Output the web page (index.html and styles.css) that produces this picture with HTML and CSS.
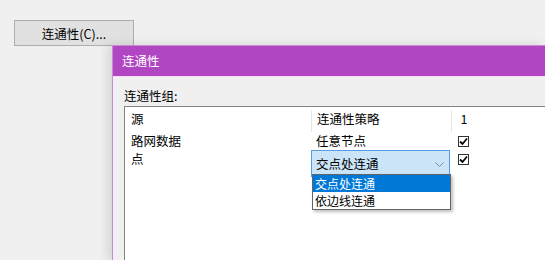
FILE: index.html
```html
<!DOCTYPE html>
<html>
<head>
<meta charset="utf-8">
<title>连通性</title>
<link rel="stylesheet" href="styles.css">
</head>
<body>
	<!-- toolbar -->
	<div class="toolbar">
		<button class="btn">连通性(C)...</button>
	</div>

	<!-- dialog window -->
	<div class="dialog">
		<div class="titlebar">连通性</div>
		<div class="content">
			<div class="label">连通性组:</div>
			<div class="grid">
				<div class="row head">
					<div class="cell c1">源</div>
					<div class="cell c2">连通性策略</div>
					<div class="cell c3">1</div>
				</div>
				<div class="row r2">
					<div class="cell c1">路网数据</div>
					<div class="cell c2">任意节点</div>
					<div class="cell c3"><span class="check"><svg width="9" height="9" viewBox="0 0 9 9"><path d="M1 4.5 L3.5 7 L8 1.5" fill="none" stroke="#000" stroke-width="1.8"/></svg></span></div>
				</div>
				<div class="row r3">
					<div class="cell c1">点</div>
					<div class="cell c2">
						<div class="combo">
							<span>交点处连通</span>
							<svg class="chev" width="9" height="6" viewBox="0 0 9 6"><path d="M0.5 0.5 L4.5 4.5 L8.5 0.5" fill="none" stroke="#8a8a8a" stroke-width="1"/></svg>
						</div>
					</div>
					<div class="cell c3"><span class="check"><svg width="9" height="9" viewBox="0 0 9 9"><path d="M1 4.5 L3.5 7 L8 1.5" fill="none" stroke="#000" stroke-width="1.8"/></svg></span></div>
				</div>

				<!-- open drop-down list -->
				<ul class="droplist">
					<li class="sel">交点处连通</li>
					<li>依边线连通</li>
				</ul>
			</div>
		</div>
	</div>
</body>
</html>
```

FILE: styles.css
```css
body {
	margin: 0;
	width: 545px;
	height: 260px;
	overflow: hidden;
	background: #f0f0f0;
	font: 12.5px "Noto Sans CJK SC", "Liberation Sans", sans-serif;
	color: #000;
}

.toolbar {
	padding: 20px 0 0 14px;
}

.btn {
	width: 120px;
	height: 26px;
	padding: 0;
	border: 1px solid #adadad;
	background: #e1e1e1;
	font: inherit;
	color: #000;
}

.dialog {
	position: absolute;
	left: 112px;
	top: 45px;
	width: 432px;
	height: 215px;
	overflow: hidden;
	border: 1px solid #c98ad4;
	border-right: none;
	border-bottom: none;
	background: #f0f0f0;
	box-shadow: -4px 0 10px rgba(0, 0, 0, 0.12);
}

.titlebar {
	height: 30px;
	line-height: 30px;
	padding-left: 9px;
	background: #b146c2;
	color: #fff;
	border-bottom: 1px solid #f6def8;
}

.content {
	padding: 9px 0 0 11px;
}

.label {
	height: 20px;
	line-height: 20px;
}

.grid {
	position: relative;
	height: 160px;
	background: #fff;
	border-top: 1px solid #828282;
	border-left: 1px solid #828282;
}

.row {
	display: flex;
}

.cell {
	line-height: 18px;
}

.c1 {
	width: 180px;
	padding-left: 6px;
}

.c2 {
	width: 134px;
	padding-left: 5px;
}

.c3 {
	width: 24px;
	text-align: center;
}

.head {
	height: 22px;
	padding-top: 3px;
}

.head .c2,
.head .c3 {
	border-left: 1px solid #e5e5e5;
}

.r2 {
	height: 18px;
}

.r3 {
	height: 28px;
}

.r2 .c3,
.r3 .c3 {
	margin-left: 1px;
}

.check {
	display: inline-block;
	width: 11px;
	height: 11px;
	box-sizing: border-box;
	border: 1px solid #333;
	background: #fff;
	margin-top: 2px;
	line-height: 0;
}

.r3 .c2 {
	padding-left: 0;
	width: 139px;
}

.combo {
	display: flex;
	align-items: center;
	justify-content: space-between;
	height: 27px;
	box-sizing: border-box;
	padding: 0 5px 0 4px;
	border: 1px solid #569de5;
	background: #cce4f7;
}

.chev {
	margin-top: 2px;
}

.droplist {
	position: absolute;
	left: 187px;
	top: 67px;
	width: 139px;
	margin: 0;
	padding: 0;
	list-style: none;
	box-sizing: border-box;
	border: 1px solid #646464;
	background: #fff;
	box-shadow: 2px 2px 3px rgba(0, 0, 0, 0.25);
}

.droplist li {
	height: 17px;
	line-height: 17px;
	padding-left: 2px;
	font-size: 12px;
	overflow: hidden;
}

.droplist li.sel {
	background: #0078d7;
	color: #fff;
}
```
